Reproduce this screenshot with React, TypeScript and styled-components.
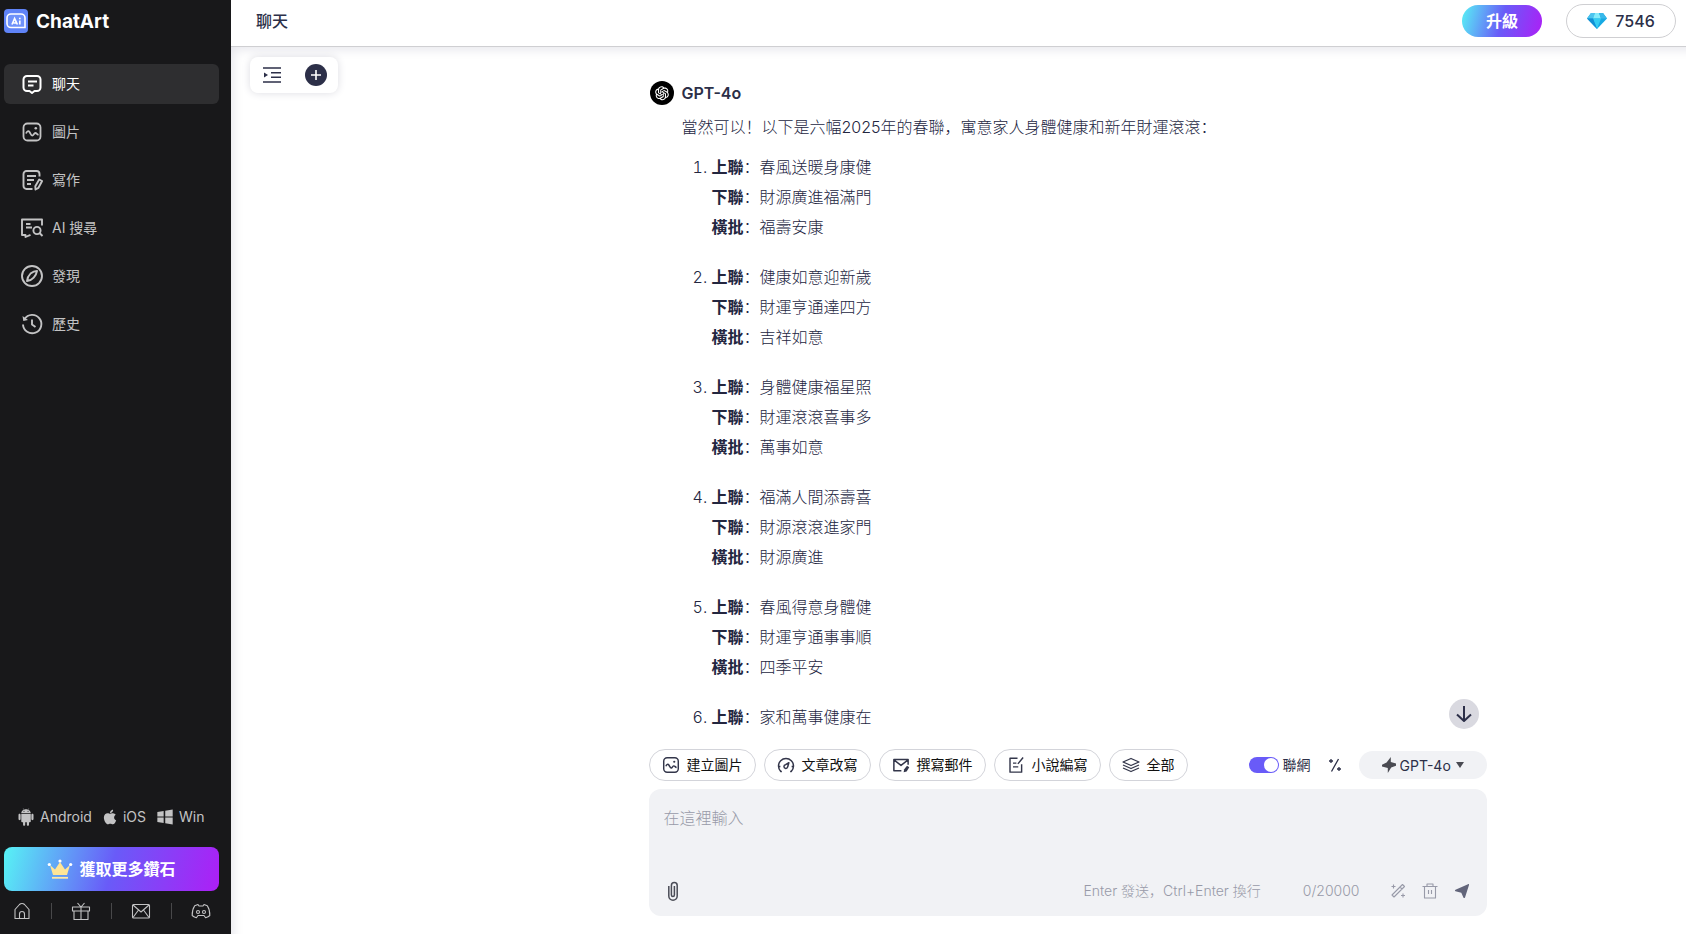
import React, { useState } from 'react';
import styled, { createGlobalStyle, css } from 'styled-components';
import { AiFillAndroid, AiFillApple, AiFillWindows, AiOutlineOpenAI } from 'react-icons/ai';

const GlobalStyle = createGlobalStyle`
  *, *::before, *::after { box-sizing: border-box; }
  body {
    margin: 0;
    background: #fff;
    color: #2c2f48;
    font-family: Inter, "Noto Sans CJK SC", sans-serif;
    font-size: 14px;
  }
  button, input, textarea, select { font: inherit; color: inherit; }
  button { cursor: pointer; border: 0; background: none; padding: 0; }
  a { color: inherit; text-decoration: none; }
  svg { display: block; flex: none; }
`;

const brandGradient = css`
  background: linear-gradient(105deg, #57f3f5 0%, #695bf8 50%, #ad1ff6 100%);
`;

/* ---------- layout ---------- */

const Shell = styled.div`
  display: flex;
  height: 100vh;
`;

const Sidebar = styled.aside`
  display: flex;
  flex-direction: column;
  flex: none;
  width: 231px;
  padding: 8px 12px 13px 4px;
  background: #18181a;
  color: #c3c3c4;
`;

const Page = styled.div`
  display: flex;
  flex-direction: column;
  flex: 1;
  min-width: 0;
`;

/* ---------- sidebar ---------- */

const Brand = styled.a`
  display: flex;
  align-items: center;
  gap: 8px;
  height: 26px;
  color: #fff;
  font-size: 19px;
  font-weight: 700;
`;

const Nav = styled.nav`
  display: flex;
  flex-direction: column;
  gap: 8px;
  margin-top: 30px;
`;

const NavLink = styled.a<{ $active?: boolean }>`
  display: flex;
  align-items: center;
  gap: 8px;
  height: 40px;
  padding: 0 16px;
  border-radius: 6px;
  background: ${(p) => (p.$active ? '#2e2e30' : 'transparent')};
  color: ${(p) => (p.$active ? '#fff' : '#c3c3c4')};
  line-height: 18px;
`;

const Platforms = styled.div`
  display: flex;
  align-items: center;
  gap: 9px;
  margin-top: auto;
  padding-left: 12px;
`;

const PlatformLink = styled.a`
  display: flex;
  align-items: center;
  gap: 4px;
  line-height: 20px;
`;

const DiamondsButton = styled.button`
  ${brandGradient}
  display: flex;
  align-items: center;
  justify-content: center;
  gap: 6px;
  height: 44px;
  margin-top: 20px;
  border-radius: 8px;
  color: #fff;
  font-size: 16px;
  font-weight: 700;
  line-height: 20px;
`;

const FooterLinks = styled.div`
  display: flex;
  justify-content: space-between;
  align-items: center;
  margin-top: 10px;
  padding: 0 8px 0 9px;
`;

const FooterLink = styled.a`
  display: flex;
`;

const Divider = styled.span`
  width: 1px;
  height: 16px;
  background: #48484a;
`;

/* ---------- header ---------- */

const Header = styled.header`
  display: flex;
  align-items: center;
  flex: none;
  gap: 24px;
  height: 47px;
  padding: 0 10px 5px 25px;
  border-bottom: 1px solid #cfcfd2;
`;

const PageTitle = styled.h1`
  flex: 1;
  margin: 0;
  font-size: 16px;
  font-weight: 500;
  line-height: 18px;
`;

const UpgradeButton = styled.button`
  ${brandGradient}
  width: 80px;
  height: 32px;
  border-radius: 16px;
  color: #fff;
  font-size: 16px;
  font-weight: 700;
  line-height: 20px;
`;

const Balance = styled.button`
  display: flex;
  align-items: center;
  justify-content: center;
  gap: 8px;
  width: 110px;
  height: 34px;
  border: 1px solid #cfcfd2;
  border-radius: 17px;
  font-size: 16px;
  font-weight: 500;
  line-height: 18px;
`;

/* ---------- conversation ---------- */

const Workspace = styled.div`
  display: flex;
  flex: 1;
  min-height: 0;
  box-shadow: inset 8px 8px 12px -6px #e4e4ea;
`;

const Rail = styled.div`
  flex: none;
  width: 218px;
  padding: 10px 19px;
`;

const RailCard = styled.div`
  display: flex;
  align-items: center;
  justify-content: space-between;
  width: 88px;
  height: 36px;
  padding: 0 11px 0 12px;
  border-radius: 8px;
  background: #fff;
  box-shadow: 0 0 8px #dcdce2;
`;

const NewChat = styled.button`
  display: grid;
  place-items: center;
  width: 22px;
  height: 22px;
  border-radius: 50%;
  background: #2c2f48;
  color: #fff;
`;

const Chat = styled.main`
  display: flex;
  flex-direction: column;
  flex: 1;
  min-width: 0;
  max-width: 838px;
  margin: 0 auto;
  padding-bottom: 18px;
`;

const ThreadFrame = styled.div`
  position: relative;
  flex: 1;
  min-height: 0;
`;

const Thread = styled.div`
  height: 100%;
  padding: 34px 1px 0;
  overflow: hidden;
`;

const Author = styled.div`
  display: flex;
  align-items: center;
  gap: 8px;
  height: 24px;
  font-size: 16px;
  font-weight: 600;
  line-height: 18px;
`;

const Avatar = styled.span`
  display: grid;
  place-items: center;
  width: 24px;
  height: 24px;
  border-radius: 50%;
  background: #000;
  color: #fff;
`;

const Message = styled.div`
  padding-left: 32px;
  color: #23263f;
  font-size: 16px;
  font-weight: 300;
  line-height: 30px;
`;

const Intro = styled.p`
  margin: 7px 0 10px;
`;

const Couplets = styled.ol`
  display: flex;
  flex-direction: column;
  gap: 20px;
  margin: 0;
  padding-left: 30px;
`;

const CoupletLine = styled.div`
  strong { font-weight: 700; }
`;

const ScrollDown = styled.button`
  position: absolute;
  right: 8px;
  bottom: 12px;
  display: grid;
  place-items: center;
  width: 30px;
  height: 30px;
  border-radius: 50%;
  background: #d9d9e0;
`;

/* ---------- composer ---------- */

const Tools = styled.div`
  display: flex;
  align-items: center;
  flex: none;
  gap: 8px;
  margin-top: 8px;
`;

const ToolPill = styled.button`
  display: flex;
  align-items: center;
  gap: 7px;
  height: 32px;
  padding: 0 12px;
  border: 1px solid #d3d4da;
  border-radius: 16px;
  color: #111;
  line-height: 18px;
  white-space: nowrap;
  svg { color: #33364a; }
`;

const Options = styled.div`
  display: flex;
  align-items: center;
  gap: 17px;
  margin-left: auto;
`;

const WebToggle = styled.label`
  display: flex;
  align-items: center;
  gap: 4px;
  line-height: 18px;
`;

const Switch = styled.input`
  appearance: none;
  display: flex;
  align-items: center;
  width: 30px;
  height: 16px;
  margin: 0;
  padding: 1px;
  border-radius: 8px;
  background: ${(p) => (p.checked ? '#695bf8' : '#c3c3c9')};
  &::before {
    content: '';
    width: 14px;
    height: 14px;
    margin-left: ${(p) => (p.checked ? 'auto' : '0')};
    border-radius: 50%;
    background: #fff;
  }
`;

const IconButton = styled.button`
  display: flex;
`;

const ModelPicker = styled.label`
  display: flex;
  align-items: center;
  justify-content: center;
  gap: 4px;
  width: 128px;
  height: 28px;
  border-radius: 14px;
  background: #f1f2f5;
`;

const ModelSelect = styled.select`
  appearance: none;
  width: 52px;
  padding: 0;
  border: 0;
  background: none;
`;

const Composer = styled.form`
  display: flex;
  flex-direction: column;
  flex: none;
  height: 127px;
  margin-top: 8px;
  padding: 14px 17px 12px 15px;
  border-radius: 12px;
  background: #f1f2f5;
`;

const Prompt = styled.textarea`
  flex: 1;
  width: 100%;
  padding: 0;
  border: 0;
  outline: 0;
  resize: none;
  background: none;
  font-size: 16px;
  font-weight: 300;
  line-height: 30px;
  &::placeholder { color: #989aa8; opacity: 1; }
`;

const ComposerBar = styled.div`
  display: flex;
  align-items: center;
  height: 26px;
  color: #989aa8;
`;

const Hint = styled.span`
  margin-left: auto;
  font-weight: 300;
  line-height: 18px;
`;

const Counter = styled.span`
  margin: 0 30px 0 42px;
  font-weight: 300;
  line-height: 18px;
`;

const ComposerActions = styled.div`
  display: flex;
  gap: 16px;
`;

/* ---------- icons ---------- */

type IconProps = { size?: number; view?: number; width?: number; children: React.ReactNode };

const Icon = ({ size = 24, view = 24, width = 2, children }: IconProps) => (
  <svg width={size} height={size} viewBox={`0 0 ${view} ${view}`} fill="none" stroke="currentColor" strokeWidth={width} strokeLinejoin="round" aria-hidden="true">
    {children}
  </svg>
);

const LogoIcon = () => (
  <svg width="24" height="24" viewBox="0 0 24 24" fill="none" aria-hidden="true">
    <rect width="24" height="24" rx="4" fill="#5f83f7" />
    <path d="M7 5h10a4 4 0 0 1 4 4v9.500H7a4 4 0 0 1-4-4V9a4 4 0 0 1 4-4z" fill="#6f92fa" stroke="#fff" strokeWidth="1.600" />
    <path d="M8 15.500l2.600-6 2.800 6M9.500 14h3M15.800 11.500v4M15.800 8.800v1.400" stroke="#fff" strokeWidth="1.700" />
  </svg>
);

const ChatIcon = () => (
  <Icon>
    <path d="M7 4h10a3.500 3.500 0 0 1 3.500 3.500v8A3.500 3.500 0 0 1 17 19h-2.500L12 21l-2.500-2H7a3.500 3.500 0 0 1-3.500-3.500v-8A3.500 3.500 0 0 1 7 4z" />
    <path d="M8 9.500h9M8 13.500h5.500" />
  </Icon>
);

const ImageIcon = ({ size = 24, width = 1.8 }: { size?: number; width?: number }) => (
  <Icon size={size} width={width}>
    <rect x="3.500" y="3.500" width="17" height="17" rx="4" />
    <path d="M6 13.500c1-2.500 2.500-3 3.500-1.500s1.700 4 3 3.500 1.500-2.500 2.800-2.500S17 14.500 18.500 15" />
    <circle cx="15.800" cy="8.200" r="1.300" fill="currentColor" stroke="none" />
  </Icon>
);

/* Same drawing as ImageIcon, with less margin round the frame for the tool pill. */
const ImagePillIcon = () => (
  <svg width="18" height="18" viewBox="1.500 1.500 21 21" fill="none" stroke="currentColor" strokeWidth="1.700" aria-hidden="true">
    <rect x="3.500" y="3.500" width="17" height="17" rx="4" />
    <path d="M6 13.500c1-2.500 2.500-3 3.500-1.500s1.700 4 3 3.500 1.500-2.500 2.800-2.500S17 14.500 18.500 15" />
    <circle cx="15.800" cy="8.200" r="1.300" fill="currentColor" stroke="none" />
  </svg>
);

const WriteIcon = () => (
  <Icon width={1.9}>
    <path d="M12.500 21H6.500a3 3 0 0 1-3-3V6a3 3 0 0 1 3-3h10a3 3 0 0 1 3 3v2.500M7 8h9M7 12h7M7 16h4" />
    <path d="M19.200 11.500l2.900 1.500-3.600 6.800-3 1.700-.2-3.300z" />
  </Icon>
);

const SearchChatIcon = () => (
  <Icon width={1.9}>
    <path d="M22 9.500V3.500H2V19h3.500v2l5-2.200M6 8h4.500M6 11.500h6" />
    <circle cx="17" cy="14.500" r="3.600" />
    <path d="M19.500 17l3 3" />
  </Icon>
);

const CompassIcon = () => (
  <Icon width={1.9}>
    <circle cx="12" cy="12" r="10" />
    <path d="M17 7c-1.500 0-4.500 1-6.500 2.600C8.500 11.500 7.300 14.500 7 17c2.500-.3 5-1.500 6.700-3.400C15.500 11.500 16.700 9 17 7z" />
  </Icon>
);

const HistoryIcon = () => (
  <Icon width={1.9}>
    <path d="M4.500 7A9.200 9.200 0 1 1 3 12.500M12 7.500v5l3.500 2.500" />
    <path d="M2.500 4l.8 5 4.700-1z" fill="currentColor" stroke="none" />
  </Icon>
);

const CrownIcon = () => (
  <svg width="26" height="22" viewBox="0 0 26 22" fill="none" aria-hidden="true">
    <path d="M3 7l5 4.500L13 4l5 7.500L23 7l-3 10H6z" fill="#ffe596" />
    <path d="M5 19.800h16" stroke="#ffe9a8" strokeWidth="1.800" />
    <circle cx="2.300" cy="6.500" r="1.600" fill="#fff" />
    <circle cx="13" cy="3" r="1.600" fill="#fff" />
    <circle cx="23.700" cy="6.500" r="1.600" fill="#fff" />
  </svg>
);

const HomeIcon = () => (
  <Icon size={18} view={18} width={1.1}>
    <path d="M2 16.500V7.500L6.500 2.500a3.500 3.500 0 0 1 5 0L16 7.500v9zM6.500 16.500V12a2.500 2.500 0 0 1 5 0v4.500" />
  </Icon>
);

const GiftIcon = () => (
  <Icon size={20} view={20} width={1.1}>
    <path d="M1.500 6h17v4h-17zM3 10v8.500h14V10M10 6v12.500M6.500 2L10 6l3.500-4" />
  </Icon>
);

const MailIcon = () => (
  <Icon size={20} view={20} width={1.1}>
    <rect x="1.500" y="3.500" width="17" height="13.500" rx="1" />
    <path d="M2 4l8 7 8-7M2 16.500l5.500-7.500M18 16.500L12.500 9" />
  </Icon>
);

const DiscordIcon = () => (
  <Icon size={20} view={20} width={1.1}>
    <path d="M7 3.500L8 5h4l1-1.500 3.300 1.300c1.700 2.500 2.600 6.200 2.500 9.700-1 1-2.500 1.700-4.200 2.200L13 14.500H7l-1.600 2.200c-1.700-.5-3.200-1.200-4.200-2.200-.1-3.500.8-7.200 2.500-9.700z" />
    <circle cx="7" cy="11" r="1.500" />
    <circle cx="13" cy="11" r="1.500" />
  </Icon>
);

const GemIcon = () => (
  <svg width="20" height="18" viewBox="0 0 20 18" aria-hidden="true">
    <path d="M4 1h12l4 5.500L10 17 0 6.500z" fill="#16a9e3" />
    <path d="M4 1h4L6 6.500H0z" fill="#4cc4ee" />
    <path d="M8 1h4l2 5.500H6z" fill="#86ebfa" />
    <path d="M12 1h4l4 5.500h-6z" fill="#38b8ea" />
    <path d="M6 6.500h8L10 17z" fill="#34cdf2" />
    <path d="M0 6.500h6L10 17z" fill="#128fd4" />
  </svg>
);

const PanelIcon = () => (
  <Icon size={20} view={20} width={1.6}>
    <path d="M1 3h18M9 7.700h10M9 12.300h10M1 17h18" />
    <path d="M2 7.500v5L6 10z" fill="currentColor" stroke="none" />
  </Icon>
);

const PlusIcon = () => (
  <Icon size={10} view={10} width={1.6}>
    <path d="M5 0v10M0 5h10" />
  </Icon>
);

const ArrowDownIcon = () => (
  <Icon size={18} view={18} width={2}>
    <path d="M9 1v15M2 9.500l7 6.500 7-6.500" />
  </Icon>
);

const GaugeIcon = () => (
  <Icon size={18}>
    <path d="M6.500 20.500H5a10 10 0 1 1 14 0h-1.500M2.500 14h2M19.500 14h2" />
    <path d="M15.800 9l-1.600 5.600a2.500 2.500 0 1 1-2.700-3z" />
  </Icon>
);

const MailEditIcon = () => (
  <Icon size={18} width={2}>
    <path d="M12.500 19.500H2.500V4.500h19v7M3 5.500l9 7 9-7" />
    <path d="M20 13l3 2-3.500 5.500-4 1 .8-4z" fill="currentColor" stroke="none" />
  </Icon>
);

const NoteIcon = () => (
  <Icon size={18} width={1.9}>
    <path d="M14 3H4v18.500h15.500V11M8 9.500h4.500M8 14.500h7M14.500 10.500L21.500 2" />
  </Icon>
);

const LayersIcon = () => (
  <Icon size={18} view={18} width={1.3}>
    <path d="M9 2.500l8 3.500-8 3.500L1 6zM1 9l8 3.500L17 9M1 12l8 3.500 8-3.500" />
  </Icon>
);

const PercentIcon = () => (
  <Icon size={14} view={14} width={1.3}>
    <path d="M10.500 1L3.500 13.500M3 1v4M1 3h4M11 9v4M9 11h4" />
  </Icon>
);

const SparkIcon = () => (
  <svg width="14" height="18" viewBox="0 0 14 18" fill="#4a4b52" aria-hidden="true">
    <path d="M8.800 1v5L14 7.500v2.200L9.200 11.500 5.800 17v-5L0 10.500V8.700l4.600-2.200z" />
  </svg>
);

const CaretIcon = () => (
  <svg width="8" height="6" viewBox="0 0 8 6" fill="#4a4b52" aria-hidden="true">
    <path d="M0 0h8L4 6z" />
  </svg>
);

const ClipIcon = () => (
  <svg width="18" height="20" viewBox="0 0 18 20" fill="none" stroke="#4a4c56" strokeWidth="1.500" aria-hidden="true">
    <path d="M4.800 5v10a4.200 4.200 0 0 0 8.400 0V4.500a2.900 2.900 0 0 0-5.800 0V14a1.500 1.500 0 0 0 3 0V5" />
  </svg>
);

const WandIcon = () => (
  <Icon size={16} view={16} width={1.1}>
    <path d="M12.500 1.500l2 2L4 14l-2-2zM10 4l2 2M3.500 1.500v4M1.500 3.500h4M13 10.500v4M11 12.500h4" />
  </Icon>
);

const TrashIcon = () => (
  <Icon size={16} view={16} width={1.1}>
    <path d="M.500 3.500h15M5 3V1h6v2M2.500 3.500V15h11V3.500M6.500 7v4M9.500 7v4" />
  </Icon>
);

const SendIcon = () => (
  <svg width="16" height="16" viewBox="0 0 16 16" fill="#62657a" aria-hidden="true">
    <path d="M14 1.200c.7-.3 1.200.2 1 .9L11 14.500c-.3.800-1.200.8-1.600 0L7.300 9.700 1.500 8.300c-.8-.3-.8-1.200 0-1.600z" />
  </svg>
);

/* ---------- content ---------- */

const navItems = [
  { label: '聊天', icon: <ChatIcon />, active: true },
  { label: '圖片', icon: <ImageIcon /> },
  { label: '寫作', icon: <WriteIcon /> },
  { label: 'AI 搜尋', icon: <SearchChatIcon /> },
  { label: '發現', icon: <CompassIcon /> },
  { label: '歷史', icon: <HistoryIcon /> },
];

const couplets: [string, string][][] = [
  [['上聯', '春風送暖身康健'], ['下聯', '財源廣進福滿門'], ['橫批', '福壽安康']],
  [['上聯', '健康如意迎新歲'], ['下聯', '財運亨通達四方'], ['橫批', '吉祥如意']],
  [['上聯', '身體健康福星照'], ['下聯', '財運滾滾喜事多'], ['橫批', '萬事如意']],
  [['上聯', '福滿人間添壽喜'], ['下聯', '財源滾滾進家門'], ['橫批', '財源廣進']],
  [['上聯', '春風得意身體健'], ['下聯', '財運亨通事事順'], ['橫批', '四季平安']],
  [['上聯', '家和萬事健康在']],
];

const tools = [
  { label: '建立圖片', icon: <ImagePillIcon /> },
  { label: '文章改寫', icon: <GaugeIcon /> },
  { label: '撰寫郵件', icon: <MailEditIcon /> },
  { label: '小說編寫', icon: <NoteIcon /> },
  { label: '全部', icon: <LayersIcon /> },
];

export default function App() {
  const [online, setOnline] = useState(true);
  const [prompt, setPrompt] = useState('');

  return (
    <Shell lang="zh-Hans">
      <GlobalStyle />
      <Sidebar>
        <Brand href="#">
          <LogoIcon />
          ChatArt
        </Brand>
        <Nav>
          {navItems.map((item) => (
            <NavLink key={item.label} href="#" $active={item.active}>
              {item.icon}
              {item.label}
            </NavLink>
          ))}
        </Nav>
        <Platforms>
          <PlatformLink href="#"><AiFillAndroid size={20} />Android</PlatformLink>
          <PlatformLink href="#"><AiFillApple size={18} />iOS</PlatformLink>
          <PlatformLink href="#"><AiFillWindows size={20} />Win</PlatformLink>
        </Platforms>
        <DiamondsButton>
          <CrownIcon />
          獲取更多鑽石
        </DiamondsButton>
        <FooterLinks>
          <FooterLink href="#" aria-label="Home"><HomeIcon /></FooterLink>
          <Divider />
          <FooterLink href="#" aria-label="Gift"><GiftIcon /></FooterLink>
          <Divider />
          <FooterLink href="#" aria-label="Mail"><MailIcon /></FooterLink>
          <Divider />
          <FooterLink href="#" aria-label="Discord"><DiscordIcon /></FooterLink>
        </FooterLinks>
      </Sidebar>

      <Page>
        <Header>
          <PageTitle>聊天</PageTitle>
          <UpgradeButton>升級</UpgradeButton>
          <Balance><GemIcon />7546</Balance>
        </Header>
        <Workspace>
          <Rail>
            <RailCard>
              <IconButton aria-label="Conversations"><PanelIcon /></IconButton>
              <NewChat aria-label="New chat"><PlusIcon /></NewChat>
            </RailCard>
          </Rail>
          <Chat>
            <ThreadFrame>
              <Thread>
                <Author>
                  <Avatar><AiOutlineOpenAI size={18} /></Avatar>
                  GPT-4o
                </Author>
                <Message>
                  <Intro>當然可以！以下是六幅2025年的春聯，寓意家人身體健康和新年財運滾滾：</Intro>
                  <Couplets>
                    {couplets.map((lines, i) => (
                      <li key={i}>
                        {lines.map(([name, text]) => (
                          <CoupletLine key={name}><strong>{name}</strong>：{text}</CoupletLine>
                        ))}
                      </li>
                    ))}
                  </Couplets>
                </Message>
              </Thread>
              <ScrollDown aria-label="Scroll to bottom"><ArrowDownIcon /></ScrollDown>
            </ThreadFrame>
            <Tools>
              {tools.map((tool) => (
                <ToolPill key={tool.label}>{tool.icon}{tool.label}</ToolPill>
              ))}
              <Options>
                <WebToggle>
                  <Switch type="checkbox" checked={online} onChange={(e) => setOnline(e.target.checked)} />
                  聯網
                </WebToggle>
                <IconButton aria-label="Prompt options"><PercentIcon /></IconButton>
                <ModelPicker>
                  <SparkIcon />
                  <ModelSelect aria-label="Model">
                    <option>GPT-4o</option>
                  </ModelSelect>
                  <CaretIcon />
                </ModelPicker>
              </Options>
            </Tools>
            <Composer onSubmit={(e) => e.preventDefault()}>
              <Prompt aria-label="Message" placeholder="在這裡輸入" value={prompt} onChange={(e) => setPrompt(e.target.value)} />
              <ComposerBar>
                <IconButton type="button" aria-label="Attach file"><ClipIcon /></IconButton>
                <Hint>Enter 發送，Ctrl+Enter 換行</Hint>
                <Counter>{prompt.length}/20000</Counter>
                <ComposerActions>
                  <IconButton type="button" aria-label="Improve prompt"><WandIcon /></IconButton>
                  <IconButton type="button" aria-label="Clear"><TrashIcon /></IconButton>
                  <IconButton type="submit" aria-label="Send"><SendIcon /></IconButton>
                </ComposerActions>
              </ComposerBar>
            </Composer>
          </Chat>
        </Workspace>
      </Page>
    </Shell>
  );
}
